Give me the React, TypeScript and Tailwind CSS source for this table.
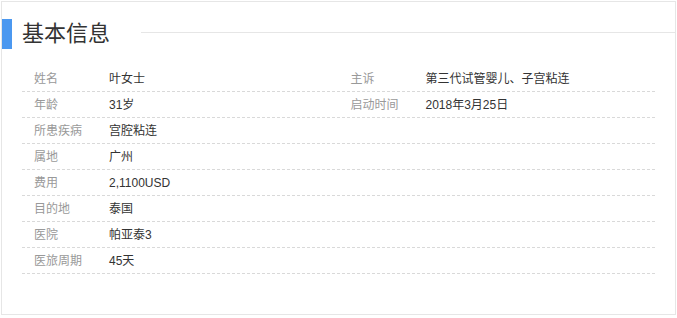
const rows: [string, string, string?, string?][] = [
  ["姓名", "叶女士", "主诉", "第三代试管婴儿、子宫粘连"],
  ["年龄", "31岁", "启动时间", "2018年3月25日"],
  ["所患疾病", "宫腔粘连"],
  ["属地", "广州"],
  ["费用", "2,1100USD"],
  ["目的地", "泰国"],
  ["医院", "帕亚泰3"],
  ["医旅周期", "45天"],
];

function Cell({ label, value }: { label?: string; value?: string }) {
  return (
    <div className="flex flex-1 items-center pl-3">
      <span className="w-[75px] text-[#999]">{label}</span>
      <span className="text-[#333]">{value}</span>
    </div>
  );
}

export default function App() {
  return (
    <div
      className="ml-px mt-px h-[314px] w-[675px] border border-[#e6e6e6] bg-white"
      style={{ fontFamily: '"Liberation Sans", "Noto Sans CJK SC", sans-serif' }}
    >
      <div className="mt-[17px] flex items-center">
        <div className="h-[30px] w-[10px] bg-[#4b98f0]" />
        <h2 className="ml-[10px] text-[22px] leading-[30px] text-[#333]">基本信息</h2>
        <div className="mb-[4px] ml-[31px] h-px flex-1 bg-[#e6e6e6]" />
      </div>
      <div className="mx-5 mt-[17px] text-[12px]">
        {rows.map(([l1, v1, l2, v2]) => (
          <div key={l1} className="flex h-[26px] border-b border-dashed border-[#d9d9d9]">
            <Cell label={l1} value={v1} />
            <Cell label={l2} value={v2} />
          </div>
        ))}
      </div>
    </div>
  );
}
